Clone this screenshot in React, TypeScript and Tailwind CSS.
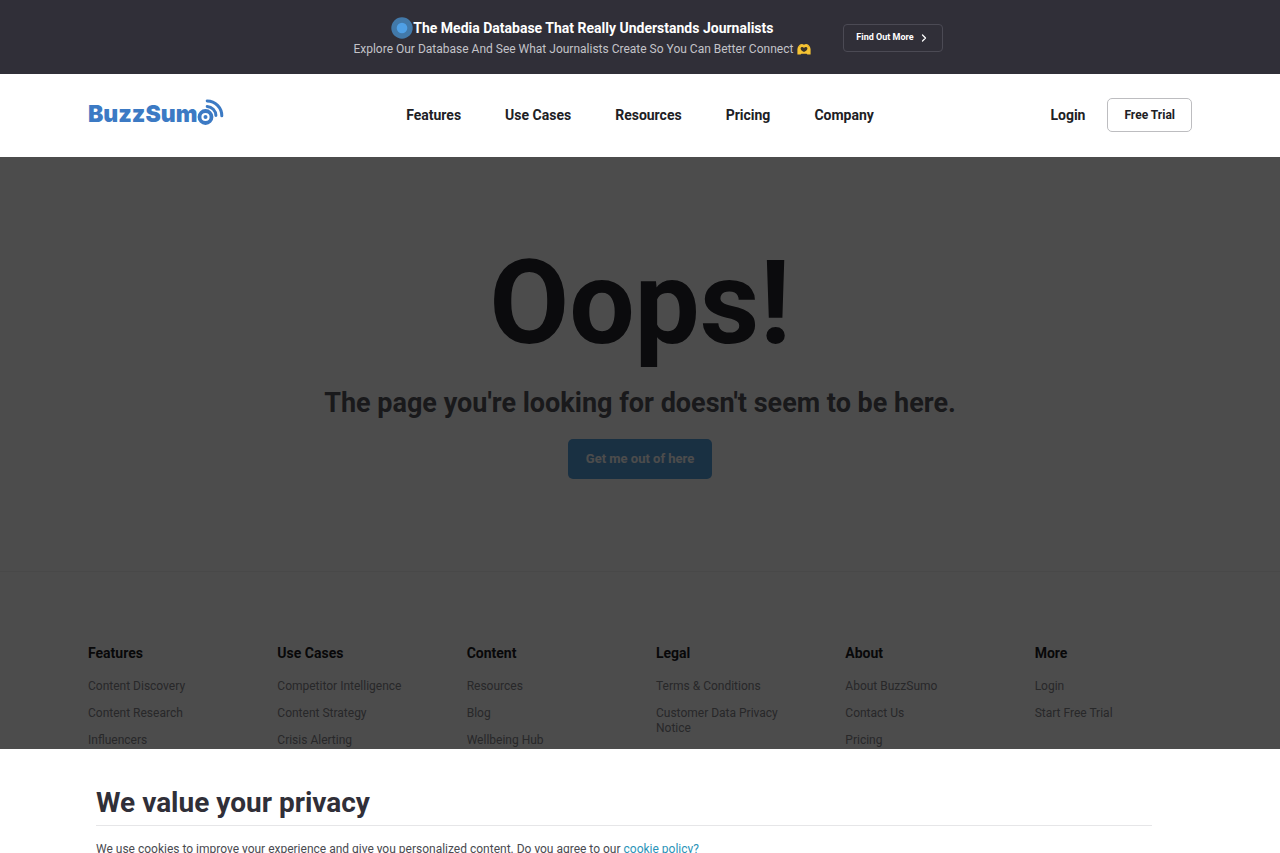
import { ChevronRight } from 'lucide-react';

const navItems = ['Features', 'Use Cases', 'Resources', 'Pricing', 'Company'];

const footerColumns = [
  { title: 'Features', links: ['Content Discovery', 'Content Research', 'Influencers'] },
  { title: 'Use Cases', links: ['Competitor Intelligence', 'Content Strategy', 'Crisis Alerting'] },
  { title: 'Content', links: ['Resources', 'Blog', 'Wellbeing Hub'] },
  { title: 'Legal', links: ['Terms & Conditions', 'Customer Data Privacy Notice'] },
  { title: 'About', links: ['About BuzzSumo', 'Contact Us', 'Pricing'] },
  { title: 'More', links: ['Login', 'Start Free Trial'] },
];

const HeartHands = () => (
  <svg viewBox="0 0 14 12" className="h-3 w-3.5" aria-hidden="true">
    <path
      d="M.4 11.500V6.200C.6 4.200 1.600 2.600 3 1.500 4.200.6 5.800.7 7 1.700 8.200.7 9.800.6 11 1.500c1.400 1.100 2.400 2.700 2.600 4.700v5.300h-3.200L9.600 10.800H4.400l-.8.700z"
      fill="#f6c433"
    />
    <path
      d="M7 9C5.100 8.100 3.600 7 3.600 5.600c0-1 .7-1.500 1.600-1.500.8 0 1.300.3 1.800.9.5-.6 1-.9 1.800-.9.900 0 1.600.5 1.600 1.500C10.400 7 8.900 8.100 7 9z"
      fill="#3b3428"
    />
    <path d="M1.900 4.200 3.400 2.500M12.100 4.200l-1.500-1.700" stroke="#d99a1c" strokeWidth=".5" />
  </svg>
);

const Banner = () => (
  <div className="flex items-center justify-center gap-8 bg-[#302f38] pt-[17px] pr-4 pb-[15px] pl-8">
    <div className="flex flex-col items-center">
      <p className="flex items-center text-sm leading-[22px] font-bold text-white">
        <svg viewBox="0 0 22 22" className="size-[22px]" aria-hidden="true">
          <circle cx="11" cy="11" r="10.700" fill="#4279a9" />
          <circle cx="11" cy="11" r="5.300" fill="#4fa0e6" />
        </svg>
        The Media Database That Really Understands Journalists
      </p>
      <p className="flex items-center gap-1 text-xs leading-5 text-[#c3c3c8]">
        Explore Our Database And See What Journalists Create So You Can Better Connect
        <HeartHands />
      </p>
    </div>
    <a
      href="#find-out-more"
      className="flex h-7 items-center gap-1 rounded border border-[#4b4a54] px-3 text-[9px] font-bold text-white"
    >
      Find Out More
      <ChevronRight className="size-3" strokeWidth={2.5} />
    </a>
  </div>
);

const Logo = () => (
  <a href="#home" aria-label="BuzzSumo" className="flex items-end text-[#3c7ac4]">
    <span className="pb-0.5 font-[Inter,sans-serif] text-[23px] leading-7 font-black">BuzzSum</span>
    <svg viewBox="0 0 27 27" className="mb-1 size-[27px]" fill="none" stroke="currentColor" aria-hidden="true">
      <circle cx="8.500" cy="18" r="6" strokeWidth="3.800" />
      <circle cx="8.500" cy="18" r="2" fill="currentColor" stroke="none" />
      <path d="M10.200 7.400a9.300 9.300 0 0 1 8.700 9" strokeWidth="3" strokeLinecap="round" />
      <path d="M10.200 1.900a14.900 14.900 0 0 1 14.600 14.900" strokeWidth="3" strokeLinecap="round" />
    </svg>
  </a>
);

const Header = () => (
  <header className="flex h-[83px] items-center bg-white px-22 pb-0.5 text-sm font-bold text-[#202024]">
    <div className="flex-1">
      <Logo />
    </div>
    <nav className="flex gap-11">
      {navItems.map((item) => (
        <a key={item} href="#nav">
          {item}
        </a>
      ))}
    </nav>
    <div className="flex flex-1 items-center justify-end gap-[22px]">
      <a href="#login">Login</a>
      <a
        href="#trial"
        className="flex h-[34px] items-center rounded-[5px] border border-[#bdbdc0] px-4 text-xs"
      >
        Free Trial
      </a>
    </div>
  </header>
);

const Footer = () => (
  <footer className="grid grid-cols-6 gap-8 border-t border-[#f1f1f2] px-22 pt-[71px]">
    {footerColumns.map(({ title, links }) => (
      <div key={title}>
        <h3 className="text-sm leading-5 font-bold text-[#1c1c22]">{title}</h3>
        <ul className="mt-4 flex flex-col gap-3 text-xs leading-[15px] text-[#85858b]">
          {links.map((link) => (
            <li key={link}>
              <a href="#footer">{link}</a>
            </li>
          ))}
        </ul>
      </div>
    ))}
  </footer>
);

const CookiePanel = () => (
  <section
    aria-labelledby="privacy-title"
    className="fixed inset-x-0 bottom-0 z-20 h-26 overflow-hidden bg-white pt-9 pr-32 pl-24"
  >
    <h2
      id="privacy-title"
      className="border-b border-[#e6e6e8] pb-1 text-[28px] leading-9 font-bold text-[#302f38]"
    >
      We value your privacy
    </h2>
    <p className="mt-3.5 text-xs leading-[18px] text-[#4a4a50]">
      We use cookies to improve your experience and give you personalized content. Do you agree to our{' '}
      <a href="#cookies" className="text-[#2b93b8]">
        cookie policy?
      </a>
    </p>
  </section>
);

export default function App() {
  return (
    <div className="h-screen overflow-hidden bg-white font-[Roboto,sans-serif]">
      <div className="relative z-20">
        <Banner />
        <Header />
      </div>

      <main className="flex flex-col items-center pt-[86px] pb-[92px] text-center">
        <h1 className="text-[116px] leading-[120px] font-bold text-[#26262c]">Oops!</h1>
        <h2 className="mt-[22px] text-[27px] leading-9 font-bold text-[#55555c]">
          The page you&apos;re looking for doesn&apos;t seem to be here.
        </h2>
        <a
          href="#home"
          className="mt-[18px] flex h-10 items-center rounded-[5px] bg-[#56a0dc] px-[18px] text-[13px] font-bold text-white"
        >
          Get me out of here
        </a>
      </main>

      <Footer />

      <div className="fixed inset-0 z-10 bg-black/70" />
      <CookiePanel />
    </div>
  );
}
